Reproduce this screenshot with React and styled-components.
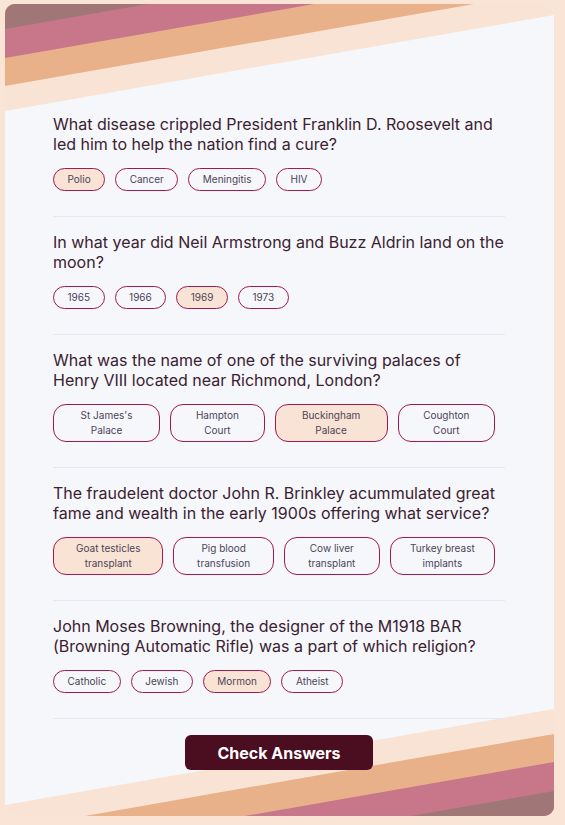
import React, { useState } from "react";
import styled, { createGlobalStyle } from "styled-components";

const GlobalStyle = createGlobalStyle`
  html, body {
    margin: 0;
    padding: 0;
    background: #fae4d5;
  }
  body {
    font-family: Inter, "Noto Sans", sans-serif;
  }
`;

const questions = [
  {
    text: "What disease crippled President Franklin D. Roosevelt and led him to help the nation find a cure?",
    answers: ["Polio", "Cancer", "Meningitis", "HIV"],
    picked: 0,
  },
  {
    text: "In what year did Neil Armstrong and Buzz Aldrin land on the moon?",
    answers: ["1965", "1966", "1969", "1973"],
    picked: 2,
  },
  {
    text: "What was the name of one of the surviving palaces of Henry VIII located near Richmond, London?",
    answers: ["St James's Palace", "Hampton Court", "Buckingham Palace", "Coughton Court"],
    picked: 2,
  },
  {
    text: "The fraudelent doctor John R. Brinkley acummulated great fame and wealth in the early 1900s offering what service?",
    answers: ["Goat testicles transplant", "Pig blood transfusion", "Cow liver transplant", "Turkey breast implants"],
    picked: 0,
  },
  {
    text: "John Moses Browning, the designer of the M1918 BAR (Browning Automatic Rifle) was a part of which religion?",
    answers: ["Catholic", "Jewish", "Mormon", "Atheist"],
    picked: 2,
  },
];

const Page = styled.div`
  padding: 4px 11px 8px 5px;
`;

const Card = styled.main`
  position: relative;
  width: 549px;
  box-sizing: border-box;
  background: #f5f7fb;
  border-radius: 10px;
  overflow: hidden;
  padding: 110px 49px 46px 48px;
  display: flex;
  flex-direction: column;
`;

const Stripes = styled.svg`
  position: absolute;
  left: 0;
  width: 549px;
  height: 110px;
  ${({ $flip }) => ($flip ? "bottom: 0; transform: rotate(180deg);" : "top: 0;")}
`;

const Question = styled.section`
  position: relative;
  padding: ${({ $first }) => ($first ? "0" : "15px")} 0 25px;
  border-bottom: 1px solid #e6e8f1;
`;

const QuestionText = styled.h2`
  margin: 0 0 14px;
  font-size: 16px;
  font-weight: 400;
  line-height: 20px;
  color: #3b2131;
`;

const Answers = styled.div`
  display: flex;
`;

const Answer = styled.button`
  flex: 0 1 auto;
  margin-right: 10px;
  font-family: Inter, "Noto Sans", sans-serif;
  font-size: 10px;
  line-height: 15px;
  color: #4d4459;
  background: ${({ $picked }) => ($picked ? "#f9e3d4" : "transparent")};
  border: 1px solid #a3184d;
  border-radius: 13px;
  padding: 3px 13.5px;
  text-align: center;
  cursor: pointer;
`;

const CheckButton = styled.button`
  position: relative;
  align-self: center;
  margin-top: 16px;
  width: 188px;
  height: 35px;
  border: none;
  border-radius: 6px;
  background: #4a0e20;
  color: #ffffff;
  font-family: Inter, "Noto Sans", sans-serif;
  font-size: 16px;
  font-weight: 700;
  cursor: pointer;
`;

const StripeArt = ({ flip }) => (
  <Stripes $flip={flip} viewBox="0 0 549 110" preserveAspectRatio="none">
    <polygon points="0,0 549,0 549,11 0,107" fill="#f9e3d4" />
    <polygon points="0,0 469,0 0,82" fill="#e8b18a" />
    <polygon points="0,0 309,0 0,54" fill="#c8778a" />
    <polygon points="0,0 143,0 0,25" fill="#a07776" />
  </Stripes>
);

export default function App() {
  const [picks, setPicks] = useState(questions.map((q) => q.picked));

  return (
    <Page>
      <GlobalStyle />
      <Card>
        <StripeArt />
        <StripeArt flip />
        {questions.map((q, i) => (
          <Question key={i} $first={i === 0}>
            <QuestionText>{q.text}</QuestionText>
            <Answers>
              {q.answers.map((a, j) => (
                <Answer
                  key={a}
                  $picked={picks[i] === j}
                  onClick={() => setPicks(picks.map((p, k) => (k === i ? j : p)))}
                >
                  {a}
                </Answer>
              ))}
            </Answers>
          </Question>
        ))}
        <CheckButton>Check Answers</CheckButton>
      </Card>
    </Page>
  );
}
